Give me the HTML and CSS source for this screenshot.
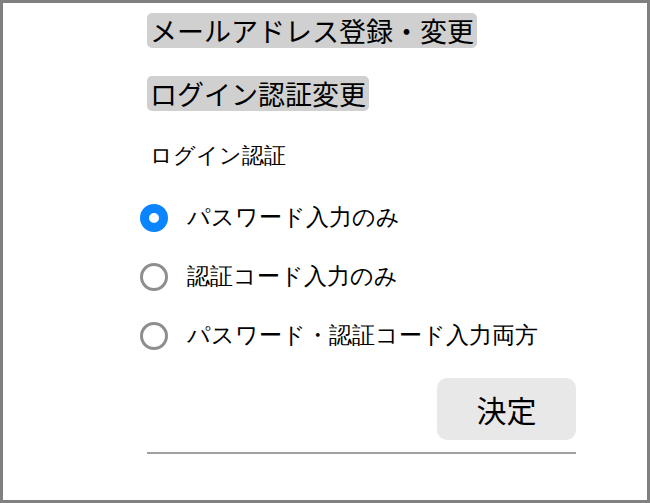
FILE: index.html
```html
<!DOCTYPE html>
<html lang="ja">
<head>
<meta charset="utf-8">
<link rel="stylesheet" href="styles.css">
</head>
<body>
<div class="frame">
  <div class="content">
    <div class="btn-row"><span class="tag-btn">メールアドレス登録・変更</span></div>
    <div class="btn-row second"><span class="tag-btn">ログイン認証変更</span></div>
    <div class="label">ログイン認証</div>
    <div class="options">
      <label class="option"><span class="radio checked"></span><span class="opt-text">パスワード入力のみ</span></label>
      <label class="option"><span class="radio"></span><span class="opt-text">認証コード入力のみ</span></label>
      <label class="option"><span class="radio"></span><span class="opt-text">パスワード・認証コード入力両方</span></label>
    </div>
    <div class="submit-row"><span class="submit">決定</span></div>
    <div class="rule"></div>
  </div>
</div>
</body>
</html>
```
FILE: styles.css
```css
html, body {
  margin: 0;
  padding: 0;
  background: #fff;
}
.frame {
  width: 650px;
  height: 503px;
  box-sizing: border-box;
  border: 3px solid #808080;
  overflow: hidden;
}
.content {
  margin-left: 144px;
  width: 429px;
  display: flex;
  flex-direction: column;
}
.btn-row {
  margin-top: 10px;
  display: flex;
}
.btn-row.second {
  margin-top: 28px;
}
.tag-btn {
  font-family: "Noto Sans CJK JP", sans-serif;
  font-size: 27px;
  line-height: 35px;
  background: #d0d0d0;
  border-radius: 5px;
  padding: 0 3px;
  color: #000;
}
.label {
  font-family: "Liberation Serif", serif;
  font-size: 22px;
  line-height: 30px;
  margin-top: 30px;
  margin-left: 3px;
  color: #000;
}
.options {
  display: flex;
  flex-direction: column;
  margin-top: 17px;
  margin-left: -7px;
}
.option {
  display: flex;
  align-items: center;
  height: 59px;
}
.radio {
  width: 22px;
  height: 22px;
  border-radius: 50%;
  border: 3px solid #8e8e8e;
  box-sizing: content-box;
  flex: none;
}
.radio.checked {
  border: 9px solid #0a84ff;
  width: 10px;
  height: 10px;
  background: #fff;
}
.opt-text {
  font-family: "Liberation Serif", serif;
  font-size: 23px;
  margin-left: 19px;
  color: #000;
}
.submit-row {
  display: flex;
  justify-content: flex-end;
  margin-top: 13px;
}
.submit {
  font-family: "Noto Sans CJK JP", sans-serif;
  font-size: 30px;
  width: 139px;
  height: 62px;
  line-height: 62px;
  text-align: center;
  background: #e8e8e8;
  border-radius: 10px;
  color: #000;
}
.rule {
  margin-top: 12px;
  height: 2px;
  background: #a0a0a0;
}
```
